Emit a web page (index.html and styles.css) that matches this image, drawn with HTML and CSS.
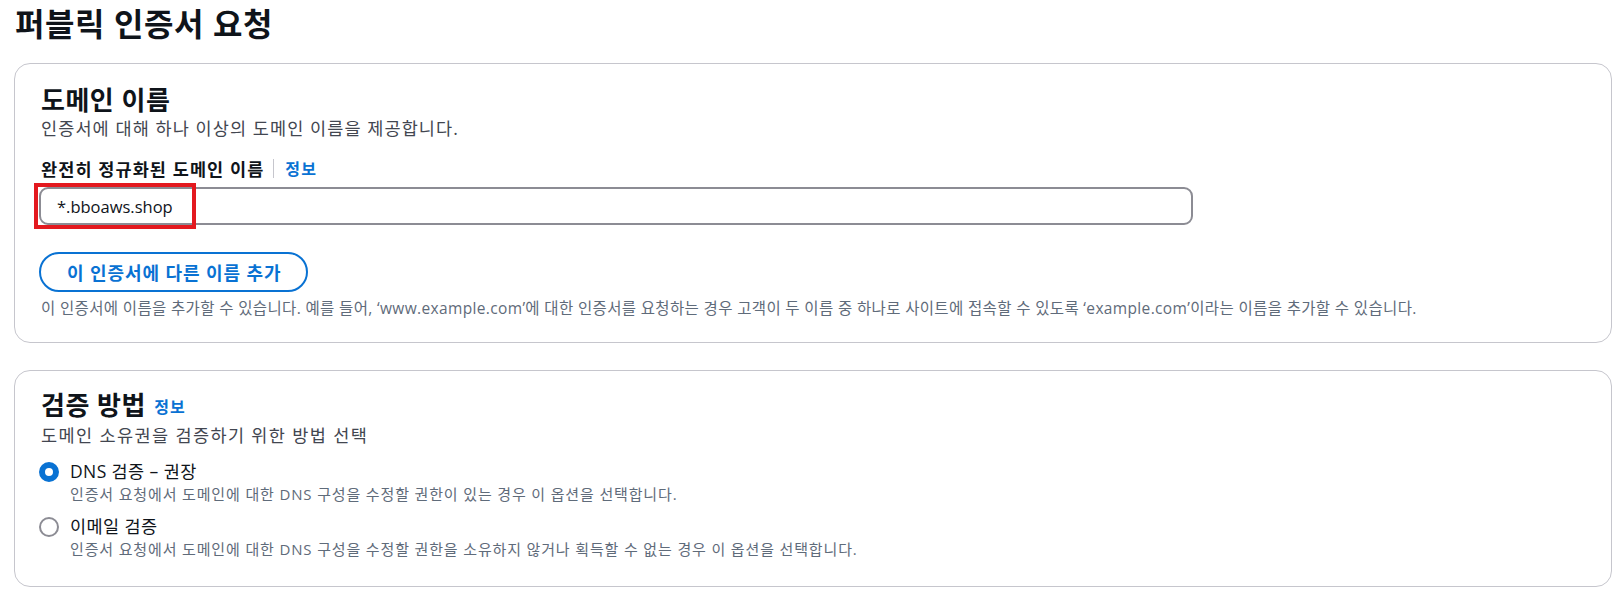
FILE: index.html
```html
<!DOCTYPE html>
<html lang="ko">
<head>
    <meta charset="UTF-8">
    <meta name="viewport" content="width=device-width, initial-scale=1.0">
    <title>퍼블릭 인증서 요청</title>
    <link rel="stylesheet" href="styles.css">
</head>
<body>
    <h1 class="page-title">퍼블릭 인증서 요청</h1>

    <section class="card">
        <h2 class="card-title">도메인 이름</h2>
        <p class="card-desc">인증서에 대해 하나 이상의 도메인 이름을 제공합니다.</p>

        <div class="field-label">
            <label for="domain">완전히 정규화된 도메인 이름</label>
            <span class="divider"></span>
            <a class="info" href="#">정보</a>
        </div>
        <div class="input-wrap">
            <input id="domain" class="text-input" type="text" value="*.bboaws.shop">
            <span class="highlight"></span>
        </div>

        <button type="button" class="btn-outline">이 인증서에 다른 이름 추가</button>
        <p class="hint">이 인증서에 이름을 추가할 수 있습니다. 예를 들어, ‘www.example.com’에 대한 인증서를 요청하는 경우 고객이 두 이름 중 하나로 사이트에 접속할 수 있도록 ‘example.com’이라는 이름을 추가할 수 있습니다.</p>
    </section>

    <section class="card card-method">
        <h2 class="card-title">검증 방법 <a class="info info-title" href="#">정보</a></h2>
        <p class="card-desc">도메인 소유권을 검증하기 위한 방법 선택</p>

        <div class="radio-list">
            <label class="radio">
                <span class="radio-dot checked"></span>
                <span class="radio-text">
                    <span class="radio-label">DNS 검증 – 권장</span>
                    <span class="radio-desc">인증서 요청에서 도메인에 대한 DNS 구성을 수정할 권한이 있는 경우 이 옵션을 선택합니다.</span>
                </span>
            </label>
            <label class="radio">
                <span class="radio-dot"></span>
                <span class="radio-text">
                    <span class="radio-label">이메일 검증</span>
                    <span class="radio-desc">인증서 요청에서 도메인에 대한 DNS 구성을 수정할 권한을 소유하지 않거나 획득할 수 없는 경우 이 옵션을 선택합니다.</span>
                </span>
            </label>
        </div>
    </section>
</body>
</html>
```

FILE: styles.css
```css
body {
    margin: 0;
    padding: 0 5px 0 14px;
    font-family: "Open Sans", "Noto Sans CJK KR", sans-serif;
    color: #0f141a;
    background-color: #fff;
}

.page-title {
    margin: 0;
    padding: 4px 0 0 1px;
    height: 63px;
    font-size: 32px;
    line-height: 40px;
    letter-spacing: 0.6px;
    font-weight: bold;
    box-sizing: border-box;
}

.card {
    border: 1px solid #c6c6cd;
    border-radius: 16px;
    padding: 20px 26px 23px;
    margin-bottom: 27px;
}

.card-title {
    margin: 0;
    font-size: 26px;
    line-height: 32px;
    letter-spacing: 0.5px;
    font-weight: bold;
}

.card-desc {
    margin: 0;
    font-size: 17.5px;
    line-height: 24px;
    letter-spacing: 1.1px;
    color: #424650;
}

.card-method .card-desc {
    letter-spacing: 1.4px;
}

.field-label {
    display: flex;
    align-items: center;
    margin-top: 14px;
    height: 28px;
    font-size: 17.5px;
    letter-spacing: 1.1px;
    font-weight: bold;
}

.divider {
    width: 1px;
    height: 19px;
    background-color: #c6c6cd;
    margin: 0 11px 0 9px;
}

.info {
    color: #0972d3;
    text-decoration: none;
    font-size: 16px;
    letter-spacing: 1.2px;
    font-weight: bold;
}

.info-title {
    margin-left: 1px;
    vertical-align: 2px;
}

.input-wrap {
    position: relative;
    width: 1154px;
    margin: 5px 0 0 -2px;
}

.text-input {
    display: block;
    width: 100%;
    height: 38px;
    padding: 0 16px;
    border: 2px solid #8c8c94;
    border-radius: 9px;
    font-family: inherit;
    font-size: 16.5px;
    color: #0f141a;
    box-sizing: border-box;
}

.highlight {
    position: absolute;
    left: -5px;
    top: -4px;
    width: 162px;
    height: 46px;
    border: 4px solid #e3191f;
    box-sizing: border-box;
}

.btn-outline {
    display: block;
    margin: 27px 0 0 -2px;
    height: 40px;
    padding: 0 25px 0 26px;
    border: 2px solid #0972d3;
    border-radius: 20px;
    background-color: #fff;
    color: #0972d3;
    font-family: inherit;
    font-size: 18px;
    letter-spacing: 0.9px;
    font-weight: bold;
    cursor: pointer;
}

.hint {
    margin: 5px 0 0;
    font-size: 15.5px;
    line-height: 22px;
    letter-spacing: 0.35px;
    color: #5f6b7a;
}

.card-method {
    padding-top: 18px;
    padding-bottom: 18px;
}

.radio-list {
    margin-top: 11px;
}

.radio {
    display: flex;
    align-items: flex-start;
    gap: 11px;
    margin-bottom: 9px;
}

.radio-dot {
    flex: none;
    width: 20px;
    height: 20px;
    margin: 4px 0 0 -2px;
    border: 2px solid #8c8c94;
    border-radius: 50%;
    box-sizing: border-box;
}

.radio-dot.checked {
    border: 6px solid #0972d3;
}

.radio-text {
    display: flex;
    flex-direction: column;
}

.radio-label {
    font-size: 17.5px;
    line-height: 26px;
    letter-spacing: 0.4px;
}

.radio-desc {
    font-size: 15px;
    line-height: 20px;
    letter-spacing: 0.85px;
    color: #5f6b7a;
}
```
